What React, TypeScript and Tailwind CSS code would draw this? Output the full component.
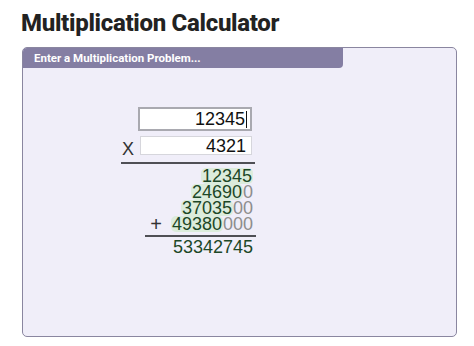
import React from 'react'

const rows = [
  { sig: '12345', pad: '' },
  { sig: '24690', pad: '0' },
  { sig: '37035', pad: '00' },
  { sig: '49380', pad: '000' },
]

function Row({ sig, pad, plus }: { sig: string; pad: string; plus?: boolean }) {
  return (
    <div className="flex h-[16px] items-center justify-end">
      {plus && <span className="mr-[9px] text-[20px] text-[#333]">+</span>}
      <span className="rounded-[5px] bg-[#dcecdc] px-[1px] text-[#1d4727]">{sig}</span>
      {pad && <span className="text-[#8d8d8d]">{pad}</span>}
    </div>
  )
}

export default function App() {
  return (
    <div
      className="h-[346px] w-[474px] bg-white pl-[21px] pt-[8px]"
      style={{ fontFamily: 'Roboto, "Liberation Sans", sans-serif' }}
    >
      <h1 className="text-[24px] font-extrabold leading-[30px] tracking-[-0.3px] text-[#222]">
        Multiplication Calculator
      </h1>
      <div className="ml-[1px] mt-[9px] h-[290px] w-[435px] overflow-hidden rounded-[5px] border border-[#8a86a0] bg-[#f0eef9]">
        <div className="h-[20px] w-[320px] rounded-br-[4px] bg-[#847ea3] pl-[11px] text-[11.5px] font-bold leading-[20px] text-white">
          Enter a Multiplication Problem...
        </div>
        <div
          className="ml-[98px] mt-[39px] w-[136px] text-[18px] leading-[16px]"
          style={{ fontFamily: '"Liberation Sans", Arial, sans-serif' }}
        >
          <div className="flex justify-end pr-[5px]">
            <div className="flex h-[24px] w-[114px] items-center justify-end border-2 border-[#a9a9b0] bg-white pr-[3px] text-[#111]">
              <span>12345</span>
              <span className="ml-[1px] h-[17px] w-[1px] bg-[#111]" />
            </div>
          </div>
          <div className="mt-[5px] flex items-end justify-between pr-[5px]">
            <span className="mb-[-2px] pl-[1px] text-[#333]">X</span>
            <div className="flex h-[19px] w-[112px] items-center justify-end border border-[#d6d6dc] bg-white pr-[5px] text-[#111]">
              4321
            </div>
          </div>
          <div className="mt-[7px] h-[2px] w-[134px] bg-[#4f4f55]" />
          <div className="mt-[4px] pr-[4px]">
            {rows.map((r, i) => (
              <Row key={r.sig} sig={r.sig} pad={r.pad} plus={i === 3} />
            ))}
          </div>
          <div className="ml-[24px] mt-[3px] h-[2px] w-[111px] bg-[#4f4f55]" />
          <div className="mt-[2px] flex h-[16px] items-center justify-end pr-[4px] text-[#1d4727]">
            53342745
          </div>
        </div>
      </div>
    </div>
  )
}
